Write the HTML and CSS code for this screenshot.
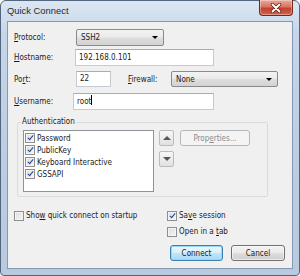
FILE: index.html
```html
<!DOCTYPE html>
<html>
<head>
    <meta charset="utf-8" />
    <title>Quick Connect</title>
    <link rel="stylesheet" href="styles.css">
</head>
<body>
    <div class="window">
        <div class="titlebar">
            <span class="title">Quick Connect</span>
            <span class="close">
                <svg width="12" height="10" viewBox="0 0 12 10">
                    <path d="M2.5 1.5 L9.5 8.5 M9.5 1.5 L2.5 8.5" stroke="#5a1c12" stroke-width="3.4" stroke-linecap="round" />
                    <path d="M2.5 1.5 L9.5 8.5 M9.5 1.5 L2.5 8.5" stroke="#fff" stroke-width="2" stroke-linecap="round" />
                </svg>
            </span>
        </div>

        <div class="client">
            <div class="row row-protocol">
                <span class="lbl lbl-protocol"><u>P</u>rotocol:</span>
                <div class="combo combo-protocol"><span>SSH2</span><i class="caret"></i></div>
            </div>
            <div class="row row-host">
                <span class="lbl lbl-host"><u>H</u>ostname:</span>
                <div class="edit edit-host">192.168.0.101</div>
            </div>
            <div class="row row-port">
                <span class="lbl lbl-port">Po<u>r</u>t:</span>
                <div class="edit edit-port">22</div>
                <span class="lbl lbl-firewall"><u>F</u>irewall:</span>
                <div class="combo combo-firewall"><span>None</span><i class="caret"></i></div>
            </div>
            <div class="row row-user">
                <span class="lbl lbl-user"><u>U</u>sername:</span>
                <div class="edit edit-user">root<span class="cursor"></span></div>
            </div>

            <fieldset class="group">
                <legend>Authentication</legend>
                <div class="group-body">
                    <div class="listbox">
                        <div class="list-item"><span class="cb checked"></span><span>Password</span></div>
                        <div class="list-item"><span class="cb checked"></span><span>PublicKey</span></div>
                        <div class="list-item"><span class="cb checked"></span><span>Keyboard Interactive</span></div>
                        <div class="list-item"><span class="cb checked"></span><span>GSSAPI</span></div>
                    </div>
                    <div class="arrows">
                        <div class="arrow-btn"><i class="tri-up"></i></div>
                        <div class="arrow-btn"><i class="tri-down"></i></div>
                    </div>
                    <div class="btn btn-disabled btn-props"><span>Prop<u>e</u>rties...</span></div>
                </div>
            </fieldset>

            <div class="options">
                <div class="options-left">
                    <div class="check"><span class="cb"></span><span>Sho<u>w</u> quick connect on startup</span></div>
                </div>
                <div class="options-right">
                    <div class="check"><span class="cb checked"></span><span>Sa<u>v</u>e session</span></div>
                    <div class="check"><span class="cb"></span><span>Open in a <u>t</u>ab</span></div>
                </div>
            </div>

            <div class="buttons">
                <div class="btn btn-default">Connect</div>
                <div class="btn">Cancel</div>
            </div>
        </div>
    </div>
</body>
</html>
```

FILE: styles.css
```css
body {
    margin: 0;
    background: #ffffff;
    font-family: "DejaVu Sans Condensed", "Liberation Sans", sans-serif;
    font-size: 8px;
    color: #1a1a1a;
}

u {
    text-decoration: underline;
    text-underline-offset: 1px;
}

/* window frame */

.window {
    width: 300px;
    height: 276px;
    box-sizing: border-box;
    border: 1px solid #52667f;
    border-radius: 6px 6px 4px 4px;
    padding: 0 6px 6px 6px;
    background: linear-gradient(#dbe6f2, #c6d6e8 12%, #bccde1 60%, #b9cadf);
    display: flex;
    flex-direction: column;
}

.titlebar {
    height: 20px;
    display: flex;
    align-items: flex-start;
    justify-content: space-between;
}

.title {
    font-family: "Liberation Sans", sans-serif;
    font-size: 9.4px;
    color: #1e2a36;
    margin-top: 4px;
}

.close {
    width: 34px;
    height: 16px;
    margin-top: -1px;
    box-sizing: border-box;
    border: 1px solid #6f2a1f;
    border-top: none;
    border-radius: 0 0 4px 4px;
    background: linear-gradient(#e9a99a, #d77463 45%, #c2412b 55%, #d2634a);
    box-shadow: inset 0 0 0 1px rgba(255, 255, 255, 0.35);
    display: flex;
    align-items: center;
    justify-content: center;
}

.client {
    flex: 1;
    border: 1px solid #8599b1;
    background: #f0f0f0;
    padding: 7px 7px 0 6px;
}

/* form rows */

.row {
    display: flex;
    align-items: center;
}

.lbl {
    flex: none;
}

.lbl-protocol { width: 62px; }
.lbl-host { width: 61px; }
.lbl-port { width: 62px; }
.lbl-user { width: 59px; }

.lbl-firewall {
    width: 43px;
    margin-left: 17px;
}

.row-host { margin-top: 3px; }
.row-port { margin-top: 5px; }
.row-user { margin-top: 6px; }

.edit {
    box-sizing: border-box;
    height: 17px;
    background: #ffffff;
    border: 1px solid #c3cad3;
    border-top-color: #a7adb6;
    padding: 0 3px;
    line-height: 15px;
}

.edit-host { width: 139px; }
.edit-port { width: 35px; height: 16px; line-height: 14px; }
.edit-user { width: 141px; }

.cursor {
    display: inline-block;
    width: 1px;
    height: 10px;
    background: #000;
    vertical-align: -1px;
}

.combo {
    box-sizing: border-box;
    height: 17px;
    border: 1px solid #8a8a8a;
    border-radius: 2px;
    background: linear-gradient(#f3f3f3, #ebebeb 45%, #dddddd 55%, #d3d3d3);
    display: flex;
    align-items: center;
    justify-content: space-between;
    padding: 0 5px 0 4px;
}

.combo-protocol { width: 88px; }
.combo-firewall { width: 107px; height: 16px; }

.caret {
    width: 0;
    height: 0;
    border-left: 3px solid transparent;
    border-right: 3px solid transparent;
    border-top: 3px solid #000;
}

/* authentication group */

.group {
    margin: 7px 0 0 3px;
    width: 251px;
    box-sizing: border-box;
    border: 1px solid #d5dbe0;
    border-radius: 2px;
    padding: 0 5px 4px 5px;
}

.group legend {
    padding: 0 1px;
    margin-left: -2px;
    line-height: 10px;
}

.group-body {
    display: flex;
    align-items: flex-start;
    margin-top: 3px;
}

.listbox {
    width: 131px;
    height: 62px;
    box-sizing: border-box;
    background: #ffffff;
    border: 1px solid #8e939b;
    padding: 1px 1px;
}

.list-item {
    display: flex;
    align-items: center;
    gap: 2px;
    height: 12px;
}

.arrows {
    display: flex;
    flex-direction: column;
    gap: 5px;
    margin-left: 5px;
}

.arrow-btn {
    width: 15px;
    height: 16px;
    box-sizing: border-box;
    border: 1px solid #b9bcbf;
    border-radius: 2px;
    background: linear-gradient(#f7f7f7, #ececec 50%, #e0e0e0);
    display: flex;
    align-items: center;
    justify-content: center;
}

.tri-up {
    width: 0;
    height: 0;
    border-left: 4px solid transparent;
    border-right: 4px solid transparent;
    border-bottom: 4px solid #555;
}

.tri-down {
    width: 0;
    height: 0;
    border-left: 4px solid transparent;
    border-right: 4px solid transparent;
    border-top: 4px solid #555;
}

/* buttons */

.btn {
    box-sizing: border-box;
    height: 16px;
    border: 1px solid #707070;
    border-radius: 3px;
    background: linear-gradient(#f2f2f2, #ebebeb 48%, #dddddd 52%, #cfcfcf);
    box-shadow: inset 0 0 0 1px rgba(255, 255, 255, 0.6);
    display: flex;
    align-items: center;
    justify-content: center;
    width: 54px;
}

.btn-disabled {
    border-color: #b5b8ba;
    background: #f4f4f4;
    color: #8a8a8a;
    box-shadow: none;
}

.btn-props {
    width: 70px;
    margin-left: 6px;
}

.btn-default {
    width: 53px;
    border-color: #3c7fb1;
    background: linear-gradient(#eaf6fd, #d9f0fc 48%, #bee6fd 52%, #a7d9f5);
    box-shadow: inset 0 0 0 1px #9cd6f4;
}

/* check boxes */

.cb {
    flex: none;
    position: relative;
    width: 10px;
    height: 10px;
    box-sizing: border-box;
    border: 1px solid #8f8f8f;
    background: linear-gradient(135deg, #dcdcdc, #f6f6f6);
    box-shadow: inset 0 0 0 1px #f4f4f4;
}

.cb.checked::after {
    content: "";
    position: absolute;
    left: 3px;
    top: 0px;
    width: 2px;
    height: 5px;
    border-right: 1.5px solid #22438a;
    border-bottom: 1.5px solid #22438a;
    transform: rotate(40deg);
}

.check {
    display: flex;
    align-items: center;
    gap: 2px;
    height: 11px;
}

.options {
    display: flex;
    margin-top: 13px;
}

.options-left {
    width: 153px;
}

.options-right {
    display: flex;
    flex-direction: column;
    gap: 5px;
}

.buttons {
    display: flex;
    justify-content: flex-end;
    gap: 8px;
    margin-top: 8px;
}
```
